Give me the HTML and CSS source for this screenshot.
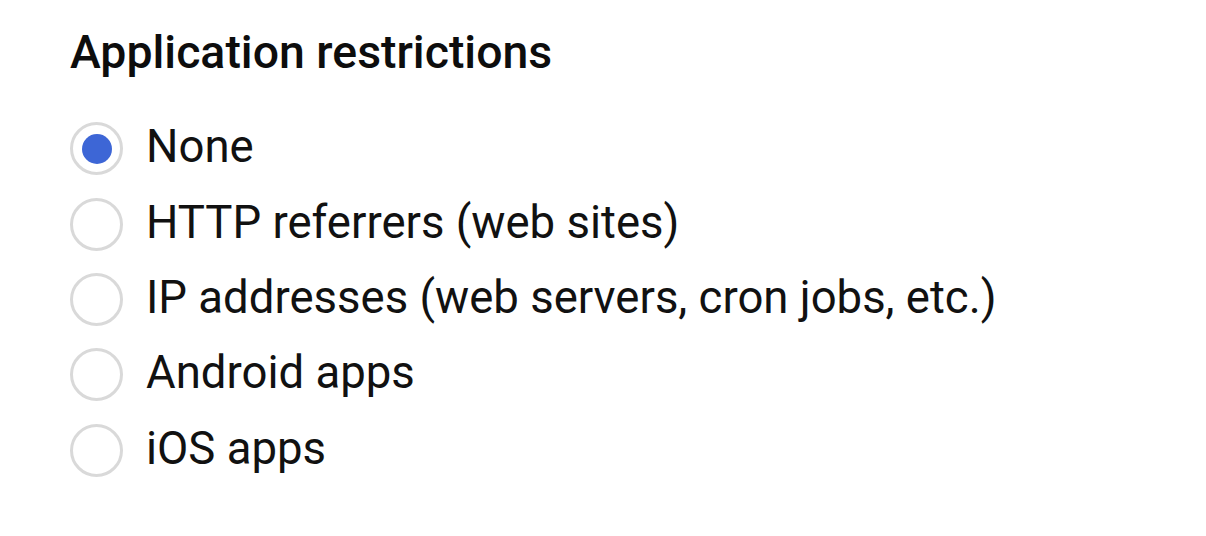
FILE: index.html
```html
<!DOCTYPE html>
<html>
<head>
<meta charset="utf-8">
<link rel="stylesheet" href="styles.css">
</head>
<body>
<div class="panel">
  <h2 class="title">Application restrictions</h2>
  <ul class="options">
    <li class="option"><span class="radio checked"><span class="dot"></span></span><span class="label">None</span></li>
    <li class="option"><span class="radio"></span><span class="label">HTTP referrers (web sites)</span></li>
    <li class="option"><span class="radio"></span><span class="label">IP addresses (web servers, cron jobs, etc.)</span></li>
    <li class="option"><span class="radio"></span><span class="label">Android apps</span></li>
    <li class="option"><span class="radio"></span><span class="label">iOS apps</span></li>
  </ul>
</div>
</body>
</html>
```
FILE: styles.css
```css
html, body {
  margin: 0;
  padding: 0;
  background: #fff;
}
body {
  font-family: Roboto, "Liberation Sans", Arial, sans-serif;
  color: #111;
}
.panel {
  padding: 26px 0 0 70px;
}
.title {
  margin: 0;
  font-size: 46.4px;
  font-weight: 500;
  line-height: 52px;
  color: #0d0d0d;
}
.options {
  list-style: none;
  margin: 33px 0 0 0;
  padding: 0;
}
.option {
  display: flex;
  align-items: center;
  height: 75.4px;
}
.radio {
  box-sizing: border-box;
  width: 53px;
  height: 53px;
  border-radius: 50%;
  border: 3px solid #d9d9d9;
  display: flex;
  align-items: center;
  justify-content: center;
  flex: none;
}
.dot {
  width: 30px;
  height: 30px;
  border-radius: 50%;
  background: #3d66d6;
}
.label {
  margin-left: 23px;
  font-size: 45.5px;
  line-height: 52px;
  padding-bottom: 3px;
}
```
